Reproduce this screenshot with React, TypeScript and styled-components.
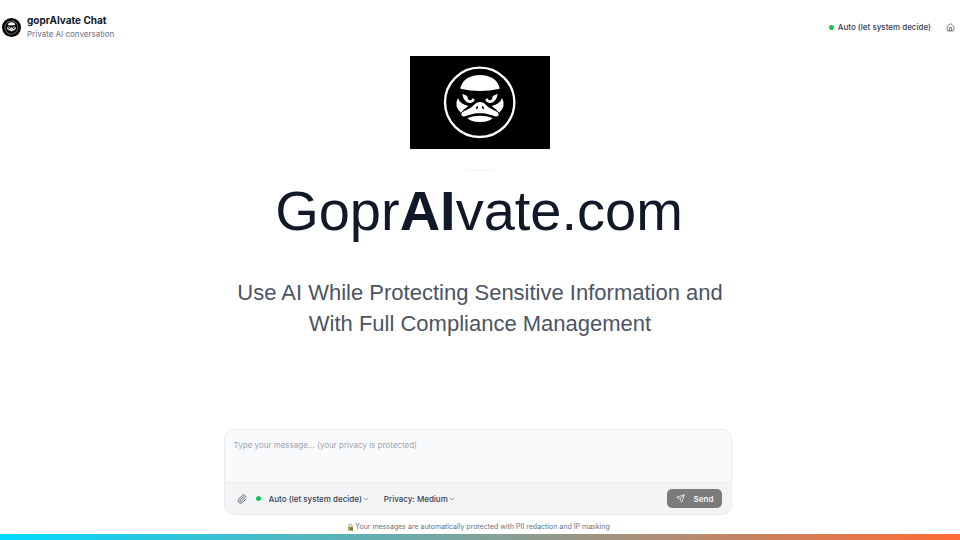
import React from "react";
import styled, { createGlobalStyle } from "styled-components";
import { ChevronDown, House, Paperclip, Send } from "lucide-react";

const GlobalStyle = createGlobalStyle`
  *, *::before, *::after { box-sizing: border-box; }
  body {
    margin: 0;
    background: #ffffff;
    color: #111827;
    font-family: Inter, "Liberation Sans", sans-serif;
  }
  h1, h2, p { margin: 0; }
  button, select, textarea { font: inherit; }
`;

const Page = styled.div`
  display: flex;
  flex-direction: column;
  min-height: 100vh;
`;

const Header = styled.header`
  display: flex;
  align-items: center;
  justify-content: space-between;
  padding: 13px 5px 15px 2px;
`;

const Brand = styled.div`
  display: flex;
  align-items: center;
  gap: 6px;
`;

const Avatar = styled.svg`
  width: 19px;
  height: 19px;
  border-radius: 50%;
`;

const BrandName = styled.h2`
  font-size: 10px;
  line-height: 14px;
  font-weight: 700;
`;

const BrandNote = styled.p`
  font-size: 8px;
  line-height: 14px;
  color: #6b7280;
`;

const HeaderTools = styled.div`
  display: flex;
  align-items: center;
  gap: 15px;
`;

const Status = styled.span`
  display: flex;
  align-items: center;
  gap: 4px;
  font-size: 8px;
  line-height: 12px;
  font-weight: 500;
  color: #374151;
`;

const Dot = styled.span`
  width: 5px;
  height: 5px;
  border-radius: 50%;
  background: #12c453;
`;

const HomeLink = styled.a`
  display: flex;
  color: #4b5563;
`;

const Hero = styled.main`
  flex: 1;
  display: flex;
  flex-direction: column;
  align-items: center;
  text-align: center;
  font-family: "Liberation Sans", Arial, sans-serif;
`;

const Logo = styled.svg`
  width: 140px;
  height: 93px;
`;

const Rule = styled.hr`
  width: 26px;
  height: 1px;
  margin: 21px 0 8px;
  border: 0;
  background: #f3f3f4;
`;

const Title = styled.h1`
  padding-right: 2px;
  font-size: 56px;
  line-height: 64px;
  font-weight: 400;
`;

const Tagline = styled.p`
  max-width: 512px;
  margin-top: 34px;
  font-size: 22px;
  line-height: 31px;
  color: #4b5563;
`;

const Footer = styled.footer`
  display: flex;
  flex-direction: column;
  align-items: center;
`;

const Composer = styled.form`
  width: 53%;
  margin-right: 4px;
  border: 1px solid #e9ebee;
  border-radius: 10px;
  background: #f9fafc;
  overflow: hidden;
`;

const Message = styled.textarea`
  display: block;
  width: 100%;
  height: 52px;
  padding: 9px;
  border: 0;
  outline: 0;
  resize: none;
  background: transparent;
  color: #111827;
  font-size: 8px;
  line-height: 12px;
  &::placeholder { color: #9ca3af; opacity: 1; }
`;

const Toolbar = styled.div`
  display: flex;
  align-items: center;
  padding: 6px 9px;
  border-top: 1px solid #e9ebee;
  background: #f3f4f6;
`;

const AttachButton = styled.button`
  display: flex;
  margin: 0 9px 0 3px;
  padding: 0;
  border: 0;
  background: none;
  color: #4b5563;
`;

const Picker = styled.label<{ $spaced?: boolean }>`
  display: flex;
  align-items: center;
  margin-left: ${({ $spaced }) => ($spaced ? "14px" : "8px")};
  color: #6b7280;
`;

const Select = styled.select`
  appearance: none;
  field-sizing: content;
  padding: 0;
  border: 0;
  background: none;
  color: #374151;
  font-size: 8px;
  line-height: 12px;
  font-weight: 500;
`;

const SendButton = styled.button`
  display: flex;
  align-items: center;
  gap: 9px;
  height: 19px;
  margin-left: auto;
  padding: 0 9px;
  border: 0;
  border-radius: 5px;
  background: #7b7b7b;
  color: #f3f4f6;
  font-size: 8px;
  font-weight: 600;
`;

const Notice = styled.p`
  display: flex;
  align-items: center;
  gap: 1px;
  padding: 6px 3px 2px 0;
  font-size: 7px;
  line-height: 11px;
  color: #6b7280;
`;

const Accent = styled.div`
  width: 100%;
  height: 6px;
  background: linear-gradient(90deg, #00d9ff, #ff6b35);
`;

function DuckFace() {
  return (
    <>
      <circle cx="119" cy="121" r="104" fill="none" stroke="#fff" strokeWidth="7" />
      <g fill="#fff">
        <path d="M61 80C64 56 88 39 120 39S176 56 179 80Q120 94 61 80Z" />
        <path d="M67 95Q86 104 104 112Q102 123 89 123Q71 121 67 95Z" />
        <path d="M173 95Q154 104 136 112Q138 123 151 123Q169 121 173 95Z" />
        <path d="M54 108Q60 127 85 132Q72 141 62 152Q41 132 54 108Z" />
        <path d="M186 108Q180 127 155 132Q168 141 178 152Q199 132 186 108Z" />
        <path d="M120 120C107 120 103 130 91 138C80 145 66 147 64 156C63 161 68 165 75 163C88 160 96 154 120 154S152 160 165 163C172 165 177 161 176 156C174 147 160 145 149 138C137 130 133 120 120 120Z" />
        <path d="M82 168Q120 154 158 168Q148 180 120 180T82 168Z" />
      </g>
      <g fill="#000">
        <path d="M82 101Q82 117 94 114L98 108Z" />
        <path d="M158 101Q158 117 146 114L142 108Z" />
        <ellipse cx="111" cy="137" rx="2.5" ry="5" transform="rotate(20 111 137)" />
        <ellipse cx="129" cy="137" rx="2.5" ry="5" transform="rotate(-20 129 137)" />
      </g>
    </>
  );
}

function LockIcon() {
  return (
    <svg width="7" height="8" viewBox="0 0 14 16" aria-hidden="true">
      <path d="M4 8V5a3 3 0 0 1 6 0v3" fill="none" stroke="#a1a5aa" strokeWidth="2" />
      <rect x="2" y="7" width="10" height="8" rx="1" fill="#b5a04b" />
      <rect x="6" y="9" width="6" height="6" fill="#7e7740" />
    </svg>
  );
}

export default function App() {
  return (
    <>
      <GlobalStyle />
      <Page>
        <Header>
          <Brand>
            <Avatar viewBox="0 0 240 240" aria-hidden="true">
              <rect width="240" height="240" fill="#000" />
              <g transform="translate(24 24) scale(0.8)">
                <DuckFace />
              </g>
            </Avatar>
            <div>
              <BrandName>goprAIvate Chat</BrandName>
              <BrandNote>Private AI conversation</BrandNote>
            </div>
          </Brand>
          <HeaderTools>
            <Status>
              <Dot />
              Auto (let system decide)
            </Status>
            <HomeLink href="#" aria-label="Home">
              <House size={9} strokeWidth={2} />
            </HomeLink>
          </HeaderTools>
        </Header>

        <Hero>
          <Logo viewBox="-90 -18 420 279" role="img" aria-label="goprAIvate logo">
            <rect x="-90" y="-18" width="420" height="279" fill="#000" />
            <DuckFace />
          </Logo>
          <Rule />
          <Title>
            Gopr<b>AI</b>vate.com
          </Title>
          <Tagline>
            Use AI While Protecting Sensitive Information and With Full Compliance Management
          </Tagline>
        </Hero>

        <Footer>
          <Composer onSubmit={(event) => event.preventDefault()}>
            <Message
              aria-label="Message"
              placeholder="Type your message... (your privacy is protected)"
            />
            <Toolbar>
              <AttachButton type="button" aria-label="Attach file">
                <Paperclip size={10} strokeWidth={2} />
              </AttachButton>
              <Dot />
              <Picker>
                <Select aria-label="Model">
                  <option>Auto (let system decide)</option>
                </Select>
                <ChevronDown size={8} />
              </Picker>
              <Picker $spaced>
                <Select aria-label="Privacy level">
                  <option>Privacy: Medium</option>
                </Select>
                <ChevronDown size={8} />
              </Picker>
              <SendButton type="submit">
                <Send size={9} />
                Send
              </SendButton>
            </Toolbar>
          </Composer>
          <Notice>
            <LockIcon />
            Your messages are automatically protected with PII redaction and IP masking
          </Notice>
          <Accent />
        </Footer>
      </Page>
    </>
  );
}
